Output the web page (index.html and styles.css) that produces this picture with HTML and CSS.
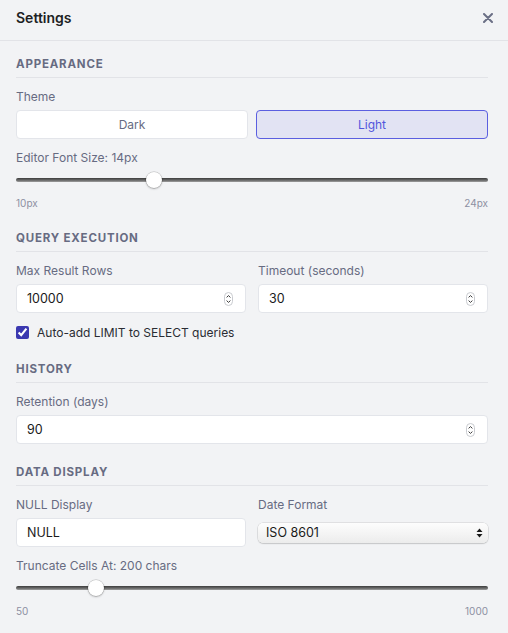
FILE: index.html
```html
<!DOCTYPE html>
<html lang="en">
<head>
<meta charset="utf-8">
<title>Settings</title>
<link rel="stylesheet" href="styles.css">
</head>
<body>
<div class="panel">
  <header class="panel-header">
    <h1 class="panel-title">Settings</h1>
    <button class="close-btn" aria-label="Close">
      <svg width="10" height="10" viewBox="0 0 10 10"><path d="M1 1 9 9M9 1 1 9" stroke="#6b6f85" stroke-width="2" stroke-linecap="round"/></svg>
    </button>
  </header>

  <main class="panel-body">
    <section class="section first">
      <h2 class="section-title">Appearance</h2>
      <div class="field">
        <div class="label">Theme</div>
        <div class="toggle">
          <button class="toggle-btn">Dark</button>
          <button class="toggle-btn active">Light</button>
        </div>
      </div>
      <div class="field">
        <div class="label">Editor Font Size: 14px</div>
        <input class="range" type="range" min="10" max="24" value="14">
        <div class="range-scale"><span>10px</span><span>24px</span></div>
      </div>
    </section>

    <section class="section">
      <h2 class="section-title">Query Execution</h2>
      <div class="grid">
        <div class="field-col">
          <div class="label">Max Result Rows</div>
          <div class="input-box">
            <input class="input" type="number" value="10000">
            <svg class="spin" width="9" height="14" viewBox="0 0 9 14"><rect x=".5" y=".5" width="8" height="13" rx="4" fill="#fff" stroke="#c9cbd0"/><path d="M2.6 5.4 4.5 3.6 6.4 5.4M2.6 8.6 4.5 10.4 6.4 8.6" fill="none" stroke="#3a3a3a" stroke-width="1"/></svg>
          </div>
        </div>
        <div class="field-col">
          <div class="label">Timeout (seconds)</div>
          <div class="input-box">
            <input class="input" type="number" value="30">
            <svg class="spin" width="9" height="14" viewBox="0 0 9 14"><rect x=".5" y=".5" width="8" height="13" rx="4" fill="#fff" stroke="#c9cbd0"/><path d="M2.6 5.4 4.5 3.6 6.4 5.4M2.6 8.6 4.5 10.4 6.4 8.6" fill="none" stroke="#3a3a3a" stroke-width="1"/></svg>
          </div>
        </div>
      </div>
      <label class="check-row">
        <input class="check" type="checkbox" checked>
        <span>Auto-add LIMIT to SELECT queries</span>
      </label>
    </section>

    <section class="section">
      <h2 class="section-title">History</h2>
      <div class="field-col">
        <div class="label">Retention (days)</div>
        <div class="input-box">
          <input class="input" type="number" value="90">
          <svg class="spin" width="9" height="14" viewBox="0 0 9 14"><rect x=".5" y=".5" width="8" height="13" rx="4" fill="#fff" stroke="#c9cbd0"/><path d="M2.6 5.4 4.5 3.6 6.4 5.4M2.6 8.6 4.5 10.4 6.4 8.6" fill="none" stroke="#3a3a3a" stroke-width="1"/></svg>
        </div>
      </div>
    </section>

    <section class="section">
      <h2 class="section-title">Data Display</h2>
      <div class="grid">
        <div class="field-col">
          <div class="label">NULL Display</div>
          <div class="input-box">
            <input class="input" type="text" value="NULL">
          </div>
        </div>
        <div class="field-col">
          <div class="label">Date Format</div>
          <div class="select-row">
            <div class="select-wrap">
              <select class="select">
                <option>ISO 8601</option>
                <option>US</option>
                <option>EU</option>
              </select>
              <svg class="select-arrow" width="7" height="10" viewBox="0 0 7 10"><path d="M3.5 0.5 6.5 4H0.5Z M3.5 9.5 6.5 6H0.5Z" fill="#1a1a1a"/></svg>
            </div>
          </div>
        </div>
      </div>
      <div class="field spaced">
        <div class="label">Truncate Cells At: 200 chars</div>
        <input class="range" type="range" min="50" max="1000" value="200">
        <div class="range-scale"><span>50</span><span>1000</span></div>
      </div>
    </section>
  </main>
</div>
</body>
</html>
```

FILE: styles.css
```css
* { box-sizing: border-box; }

html, body {
  margin: 0;
  padding: 0;
  background: #f2f3f5;
}

body {
  font-family: Inter, "Noto Sans", "Liberation Sans", sans-serif;
  color: #1d1f24;
  -webkit-font-smoothing: antialiased;
}

.panel {
  width: 508px;
  min-height: 633px;
  background: #f2f3f5;
}

.panel-header {
  display: flex;
  align-items: center;
  justify-content: space-between;
  height: 41px;
  padding: 0 14px 4px 16px;
  border-bottom: 1px solid #e2e3e7;
}

.panel-title {
  margin: 0;
  font-size: 14px;
  font-weight: 600;
  line-height: 20px;
  color: #1d1f24;
}

.close-btn {
  display: flex;
  align-items: center;
  justify-content: center;
  width: 12px;
  height: 12px;
  padding: 0;
  border: 0;
  background: transparent;
}

.panel-body {
  padding: 0 20px 16px 16px;
}

.section { margin-top: 20px; }
.section.first { margin-top: 15px; }

.section-title {
  margin: 0 0 11px;
  padding-bottom: 5px;
  border-bottom: 1px solid #e2e3e7;
  font-size: 11.5px;
  line-height: 16px;
  font-weight: 700;
  letter-spacing: 0.07em;
  text-transform: uppercase;
  color: #676b82;
}

.field + .field,
.field.spaced { margin-top: 11px; }

.label {
  font-size: 12px;
  line-height: 16px;
  color: #676b82;
  margin-bottom: 5px;
}

.toggle {
  display: grid;
  grid-template-columns: 1fr 1fr;
  gap: 8px;
}

.toggle-btn {
  height: 29px;
  border: 1px solid #e3e5ea;
  border-radius: 4px;
  background: #ffffff;
  font-family: inherit;
  font-size: 12px;
  color: #676b82;
}

.toggle-btn.active {
  background: #e2e3f3;
  border-color: #5b5fe0;
  color: #5256dc;
}

.range {
  -webkit-appearance: none;
  appearance: none;
  display: block;
  width: 100%;
  height: 16px;
  margin: 6px 0 0;
  background: transparent;
}

.range::-webkit-slider-runnable-track {
  height: 4px;
  border-radius: 2px;
  background: linear-gradient(#3c3c3c, #6e6e6e 60%, #a0a0a0);
}

.range::-webkit-slider-thumb {
  -webkit-appearance: none;
  appearance: none;
  width: 16px;
  height: 16px;
  margin-top: -6px;
  border-radius: 50%;
  background: #ffffff;
  box-shadow: 0 0 0 0.5px rgba(0, 0, 0, 0.22), 0 1px 2px rgba(0, 0, 0, 0.25);
}

.range-scale {
  display: flex;
  justify-content: space-between;
  margin-top: 8px;
  font-size: 10px;
  line-height: 14px;
  color: #8d90a2;
}

.grid {
  display: grid;
  grid-template-columns: 1fr 1fr;
  gap: 12px;
}

.input-box {
  display: flex;
  align-items: center;
  height: 29px;
  padding: 0 12px 0 10px;
  border: 1px solid #e3e5ea;
  border-radius: 4px;
  background: #ffffff;
}

.input {
  flex: 1;
  min-width: 0;
  border: 0;
  outline: none;
  padding: 0;
  background: transparent;
  font-family: inherit;
  font-size: 12.5px;
  color: #1a1a1a;
  -moz-appearance: textfield;
}

.input::-webkit-inner-spin-button,
.input::-webkit-outer-spin-button {
  -webkit-appearance: none;
  margin: 0;
}

.spin { flex: none; }

.check-row {
  display: flex;
  align-items: center;
  gap: 8px;
  margin-top: 11px;
  font-size: 12px;
  line-height: 17px;
  color: #2a2c33;
}

.check {
  width: 13px;
  height: 13px;
  margin: 0;
  accent-color: #3b38b0;
}

.select-row {
  display: flex;
  align-items: center;
  height: 29px;
}

.select-wrap {
  position: relative;
  width: 100%;
}

.select {
  -webkit-appearance: none;
  appearance: none;
  display: block;
  width: 100%;
  height: 20px;
  padding: 0 20px 0 8px;
  border: 0;
  border-radius: 5px;
  background: linear-gradient(#fdfdfd, #ececec);
  box-shadow: 0 0 0 0.5px rgba(0, 0, 0, 0.15), 0 1px 1.5px rgba(0, 0, 0, 0.12);
  font-family: inherit;
  font-size: 12.5px;
  color: #1a1a1a;
}

.select-arrow {
  position: absolute;
  right: 5px;
  top: 5px;
  pointer-events: none;
}
```
